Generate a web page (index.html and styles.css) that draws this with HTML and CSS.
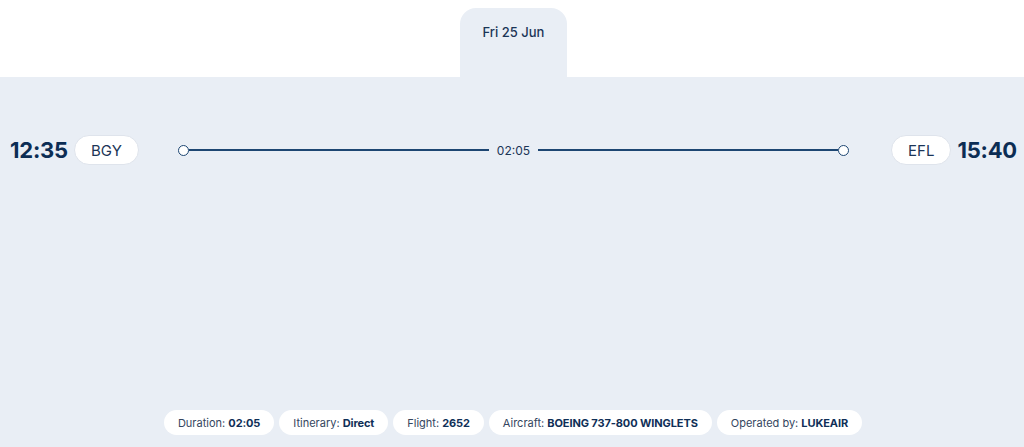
FILE: index.html
```html
<!DOCTYPE html>
<html>
<head>
<meta charset="utf-8">
<link rel="stylesheet" href="styles.css">
</head>
<body>
<div class="top">
  <div class="tab">Fri 25 Jun</div>
</div>
<div class="main">
  <div class="route">
    <div class="end">
      <span class="time">12:35</span>
      <span class="code">BGY</span>
    </div>
    <div class="track">
      <span class="dot"></span>
      <span class="line"></span>
      <span class="dur">02:05</span>
      <span class="line"></span>
      <span class="dot"></span>
    </div>
    <div class="end">
      <span class="code">EFL</span>
      <span class="time">15:40</span>
    </div>
  </div>
  <div class="chips">
    <span class="chip">Duration: <b>02:05</b></span>
    <span class="chip">Itinerary: <b>Direct</b></span>
    <span class="chip">Flight: <b>2652</b></span>
    <span class="chip">Aircraft: <b>BOEING 737-800 WINGLETS</b></span>
    <span class="chip">Operated by: <b>LUKEAIR</b></span>
  </div>
</div>
</body>
</html>
```
FILE: styles.css
```css
* { box-sizing: border-box; }
html, body { margin: 0; padding: 0; }
body {
  width: 1024px;
  height: 447px;
  overflow: hidden;
  background: #fff;
  font-family: Inter, "Noto Sans", sans-serif;
  color: #0f2f57;
}
.top {
  height: 77px;
  display: flex;
  justify-content: center;
  align-items: flex-end;
  padding-left: 3px;
}
.tab {
  width: 107px;
  height: 69px;
  background: #e9eef5;
  border-radius: 16px 16px 0 0;
  text-align: center;
  padding-top: 16px;
  font-size: 13px;
  font-weight: 500;
  color: #1b3557;
}
.main {
  background: #e9eef5;
  height: 370px;
  display: flex;
  flex-direction: column;
}
.route {
  display: flex;
  align-items: center;
  padding: 58px 7px 0 10px;
  height: 88px;
}
.end {
  display: flex;
  align-items: center;
  gap: 6px;
}
.time {
  font-size: 22px;
  font-weight: 700;
  color: #0c2d54;
  letter-spacing: -0.2px;
}
.code {
  background: #fff;
  border: 1px solid #dfe4ec;
  border-radius: 15px;
  height: 30px;
  padding: 0 16px;
  display: flex;
  align-items: center;
  font-size: 15px;
  color: #1b3557;
}
.track {
  flex: 1;
  display: flex;
  align-items: center;
  margin: 0 42px 0 39px;
}
.dot {
  width: 11px;
  height: 11px;
  border: 1.5px solid #1d4672;
  border-radius: 50%;
  background: #fff;
  flex: none;
}
.line {
  flex: 1;
  height: 1.5px;
  background: #1d4672;
}
.dur {
  font-size: 12px;
  color: #1b3557;
  padding: 0 8px;
}
.chips {
  margin-top: auto;
  margin-bottom: 12px;
  display: flex;
  justify-content: center;
  gap: 5px;
  padding-left: 2px;
}
.chip {
  background: #fff;
  border-radius: 13px;
  height: 25px;
  padding: 0 14px;
  display: flex;
  align-items: center;
  font-size: 11px;
  color: #34465e;
  white-space: pre;
}
.chip b {
  color: #0f2f57;
  font-weight: 700;
  letter-spacing: -0.1px;
}
```
